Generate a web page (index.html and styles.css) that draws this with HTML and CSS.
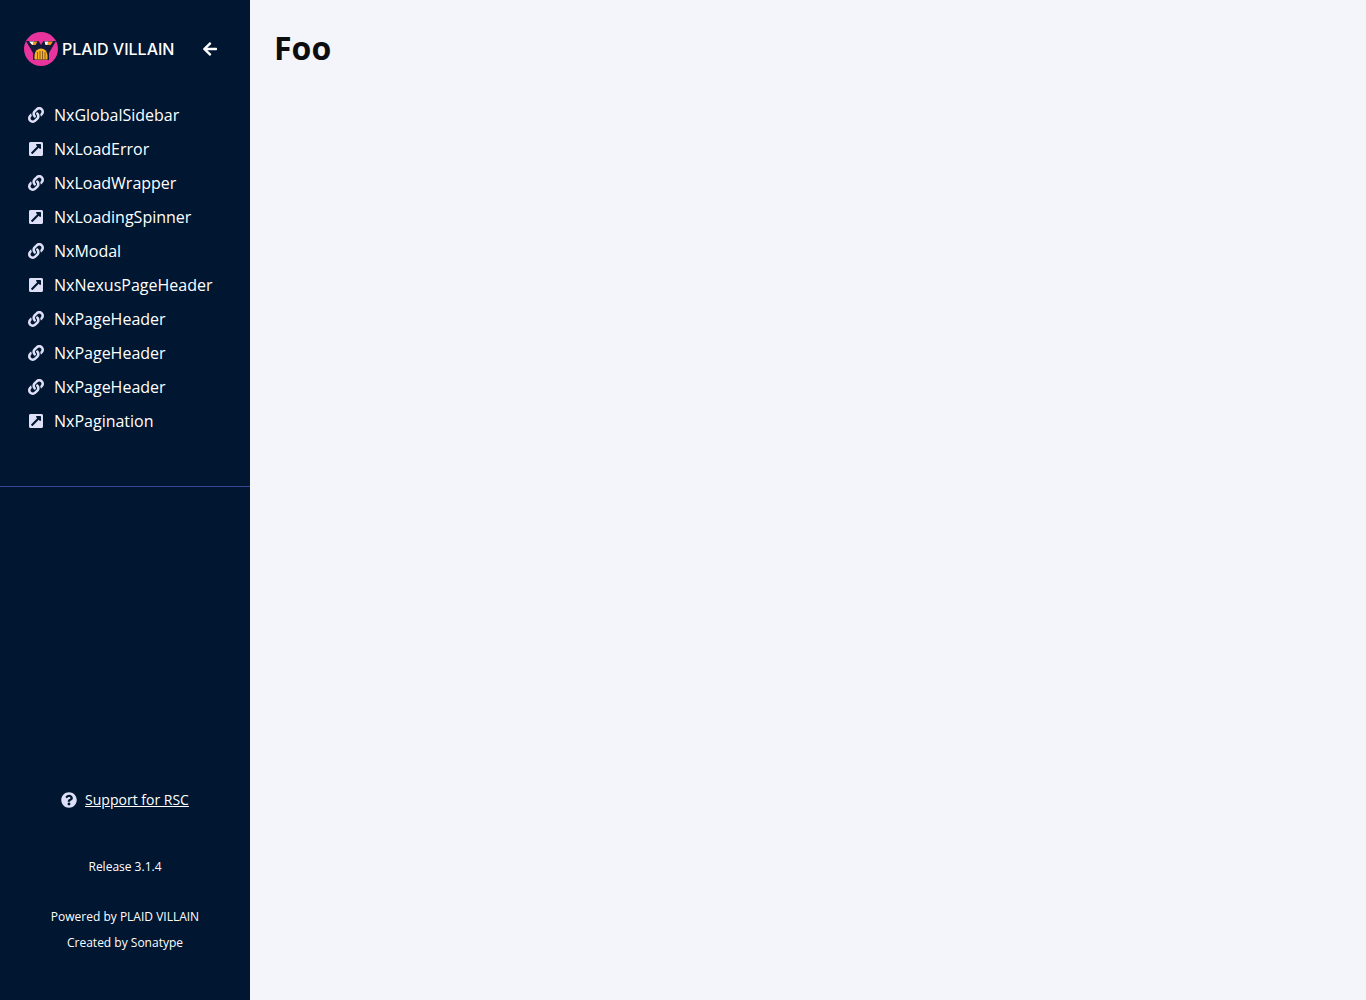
FILE: index.html
```html
<!DOCTYPE html>
<html lang="en">
<head>
<meta charset="utf-8">
<meta name="viewport" content="width=device-width, initial-scale=1">
<title>Foo</title>
<link rel="stylesheet" href="styles.css">
</head>
<body>
<svg class="sprite" aria-hidden="true">
  <symbol id="link" viewBox="0 0 512 512"><path d="M326.612 185.391c59.747 59.809 58.927 155.698.36 214.59-.11.12-.24.25-.36.37l-67.2 67.2c-59.27 59.27-155.699 59.262-214.96 0-59.27-59.26-59.27-155.7 0-214.96l37.106-37.106c9.84-9.84 26.786-3.3 27.294 10.606.648 17.722 3.826 35.527 9.69 52.721 1.986 5.822.567 12.262-3.783 16.612l-13.087 13.087c-28.026 28.026-28.905 73.66-1.155 101.96 28.024 28.579 74.086 28.749 102.325.51l67.2-67.19c28.191-28.191 28.073-73.757 0-101.83-3.701-3.694-7.429-6.564-10.341-8.569a16.037 16.037 0 0 1-6.947-12.606c-.396-10.567 3.348-21.456 11.698-29.806l21.054-21.055c5.521-5.521 14.182-6.199 20.584-1.731a152.482 152.482 0 0 1 20.522 17.197zM467.547 44.449c-59.261-59.262-155.69-59.27-214.96 0l-67.2 67.2c-.12.12-.25.25-.36.37-58.566 58.892-59.387 154.781.36 214.59a152.454 152.454 0 0 0 20.521 17.196c6.402 4.468 15.064 3.789 20.584-1.731l21.054-21.055c8.35-8.35 12.094-19.239 11.698-29.806a16.037 16.037 0 0 0-6.947-12.606c-2.912-2.005-6.64-4.875-10.341-8.569-28.073-28.073-28.191-73.639 0-101.83l67.2-67.19c28.239-28.239 74.3-28.069 102.325.51 27.75 28.3 26.872 73.934-1.155 101.96l-13.087 13.087c-4.35 4.35-5.769 10.79-3.783 16.612 5.864 17.194 9.042 34.999 9.69 52.721.509 13.906 17.454 20.446 27.294 10.606l37.106-37.106c59.271-59.259 59.271-155.699.001-214.959z"/></symbol>
  <symbol id="external" viewBox="0 0 448 512"><path d="M448 80v352c0 26.51-21.49 48-48 48H48c-26.51 0-48-21.49-48-48V80c0-26.51 21.49-48 48-48h352c26.51 0 48 21.49 48 48zm-88 16H248.029c-21.313 0-32.08 25.861-16.971 40.971l31.984 31.987L67.515 364.485c-4.686 4.686-4.686 12.284 0 16.971l31.029 31.029c4.687 4.686 12.285 4.686 16.971 0l195.526-195.526 31.988 31.991C358.058 263.977 384 253.425 384 231.979V120c0-13.255-10.745-24-24-24z"/></symbol>
</svg>
<div class="layout">
  <aside class="sidebar">
    <header class="sidebar-header">
      <a class="brand" href="#home">
        <svg class="brand-mark" viewBox="0 0 34 34" aria-hidden="true">
          <circle cx="17" cy="17" r="17" fill="#e8349c"/>
          <path fill="#131a3c" d="M2 9h12.500l2.500 4 2.500-4H32l-7 12v7H9v-7z"/>
          <path fill="#fff" d="M5 9.500h5l-1 3.500H8.200zM20.500 9.500h4l-.5 3.500h-2.500z"/>
          <path fill="#f7941e" d="M9.500 9.500h4l-2 3.500H8.500zM24.500 9.500h4.500L26.500 13H23z"/>
          <path fill="#fbb01f" d="M10.500 27.500V23q1-6.500 6.500-6.500t6.500 6.500v4.500z"/>
          <path fill="none" stroke="#8a5f26" d="M13.500 20v7.500M16 19v8.500M18.500 19v8.500M21 20v7.500"/>
        </svg>
        <span class="brand-name">PLAID VILLAIN</span>
      </a>
      <button class="collapse" type="button" aria-label="Collapse sidebar">
        <svg class="icon" viewBox="0 0 448 512" aria-hidden="true"><path d="M257.5 445.1l-22.2 22.2c-9.4 9.4-24.6 9.4-33.9 0L7 273c-9.4-9.4-9.4-24.6 0-33.9L201.4 44.7c9.4-9.4 24.6-9.4 33.9 0l22.2 22.2c9.5 9.5 9.3 25-.4 34.3L136.6 216H424c13.3 0 24 10.7 24 24v32c0 13.3-10.7 24-24 24H136.6l120.5 114.8c9.8 9.3 10 24.8.4 34.3z"/></svg>
      </button>
    </header>
    <nav class="nav" aria-label="Global">
      <a class="nav-link" href="#global-sidebar"><svg class="icon"><use href="#link"/></svg>NxGlobalSidebar</a>
      <a class="nav-link" href="#load-error"><svg class="icon"><use href="#external"/></svg>NxLoadError</a>
      <a class="nav-link" href="#load-wrapper"><svg class="icon"><use href="#link"/></svg>NxLoadWrapper</a>
      <a class="nav-link" href="#loading-spinner"><svg class="icon"><use href="#external"/></svg>NxLoadingSpinner</a>
      <a class="nav-link" href="#modal"><svg class="icon"><use href="#link"/></svg>NxModal</a>
      <a class="nav-link" href="#nexus-page-header"><svg class="icon"><use href="#external"/></svg>NxNexusPageHeader</a>
      <a class="nav-link" href="#page-header"><svg class="icon"><use href="#link"/></svg>NxPageHeader</a>
      <a class="nav-link" href="#page-header"><svg class="icon"><use href="#link"/></svg>NxPageHeader</a>
      <a class="nav-link" href="#page-header"><svg class="icon"><use href="#link"/></svg>NxPageHeader</a>
      <a class="nav-link" href="#pagination"><svg class="icon"><use href="#external"/></svg>NxPagination</a>
    </nav>
    <footer class="sidebar-footer">
      <div class="support">
        <svg class="icon" viewBox="0 0 512 512" aria-hidden="true"><path d="M504 256c0 136.997-111.043 248-248 248S8 392.997 8 256C8 119.083 119.043 8 256 8s248 111.083 248 248zM262.655 90c-54.497 0-89.255 22.957-116.549 63.758-3.536 5.286-2.353 12.415 2.715 16.258l34.699 26.31c5.205 3.947 12.621 3.008 16.665-2.122 17.864-22.658 30.113-35.797 57.303-35.797 20.429 0 45.698 13.148 45.698 32.958 0 14.976-12.363 22.667-32.534 33.976C247.128 238.528 216 254.941 216 296v4c0 6.627 5.373 12 12 12h56c6.627 0 12-5.373 12-12v-1.333c0-28.462 83.186-29.647 83.186-106.667 0-58.002-60.165-102-116.531-102zM256 338c-25.365 0-46 20.635-46 46 0 25.364 20.635 46 46 46s46-20.636 46-46c0-25.364-20.635-46-46-46z"/></svg>
        <a class="support-link" href="#support">Support for RSC</a>
      </div>
      <p class="release">Release 3.1.4</p>
      <p class="credit">Powered by PLAID VILLAIN</p>
      <p class="credit">Created by Sonatype</p>
    </footer>
  </aside>
  <main class="content">
    <h1 class="page-title">Foo</h1>
  </main>
</div>
</body>
</html>
```
FILE: styles.css
```css
* { box-sizing: border-box; }

body {
  margin: 0;
  font-family: "Open Sans", sans-serif;
  font-size: 16px;
  color: #0d0d0f;
  background: #f4f5fb;
}

.sprite { display: none; }

.layout {
  display: flex;
  min-height: 100vh;
}

.sidebar {
  display: flex;
  flex-direction: column;
  flex: 0 0 250px;
  background: #001631;
  color: #fff;
}

.sidebar-header {
  display: flex;
  align-items: center;
  justify-content: space-between;
  padding: 32px 24px 24px;
}

.brand {
  display: flex;
  align-items: center;
  gap: 4px;
  color: #fff;
  text-decoration: none;
}

.brand-mark {
  width: 34px;
  height: 34px;
}

.brand-name {
  font-family: Inter, sans-serif;
  font-size: 16px;
  font-weight: 500;
  line-height: 24px;
  white-space: nowrap;
}

.icon {
  flex: none;
  width: 16px;
  height: 16px;
  fill: #dee0f7;
}

.collapse {
  display: flex;
  align-items: center;
  justify-content: center;
  width: 32px;
  height: 32px;
  padding: 0;
  border: 0;
  background: none;
  cursor: pointer;
}

.collapse .icon { fill: #fff; }

.nav {
  display: flex;
  flex-direction: column;
  padding: 8px 0 48px;
  border-bottom: 1px solid #3a4497;
}

.nav-link {
  display: flex;
  align-items: center;
  gap: 10px;
  height: 34px;
  padding: 0 28px;
  color: #fff;
  line-height: 24px;
  text-decoration: none;
}

.sidebar-footer {
  margin-top: auto;
  padding-bottom: 44px;
  text-align: center;
}

.support {
  display: flex;
  align-items: center;
  justify-content: center;
  gap: 8px;
  font-size: 14px;
  line-height: 20px;
}

.support-link { color: #fff; }

.release,
.credit {
  margin: 0;
  font-size: 12px;
  line-height: 26px;
}

.release { margin: 44px 0 24px; }

.content {
  flex: 1;
  padding: 24px;
}

.page-title {
  margin: 0;
  font-size: 32px;
  font-weight: 700;
  line-height: 48px;
}
```
